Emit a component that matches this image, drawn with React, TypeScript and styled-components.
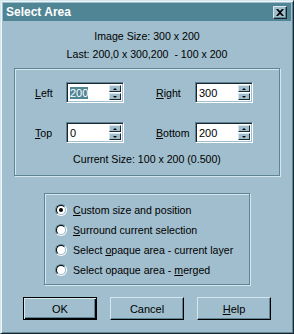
import React from 'react';
import styled, { createGlobalStyle } from 'styled-components';

const bg = '#a0becd';
const face = '#508595';
const shade = '#5e8595';
const light = '#d4e7ef';
const dark = '#1a262b';

const GlobalStyle = createGlobalStyle`
    body {
        margin: 0;
        background: ${bg};
        font-family: "Liberation Sans", Arial, sans-serif;
        font-size: 10.6px;
        color: #000;
    }
`;

const Window = styled.div`
    width: 294px;
    height: 334px;
    box-sizing: border-box;
    background: ${bg};
    border-top: 1px solid ${light};
    border-left: 1px solid ${light};
    border-right: 1px solid ${dark};
    border-bottom: 1px solid ${dark};
    box-shadow: inset 1px 1px 0 #eef6f9, inset -1px -1px 0 ${shade};
    padding: 2px;
    display: flex;
    flex-direction: column;
`;

const TitleBar = styled.div`
    height: 18px;
    flex-shrink: 0;
    display: flex;
    align-items: center;
    justify-content: space-between;
    padding: 0 4px 0 3px;
    background: ${face};
    color: #fff;
    font-weight: 700;
    font-size: 12px;
`;

const CloseButton = styled.div`
    width: 14px;
    height: 13px;
    box-sizing: border-box;
    background: ${bg};
    border-top: 1px solid ${light};
    border-left: 1px solid ${light};
    border-right: 1px solid ${dark};
    border-bottom: 1px solid ${dark};
    box-shadow: inset -1px -1px 0 ${shade};
    display: flex;
    align-items: center;
    justify-content: center;
`;

const Info = styled.div`
    margin-top: 6px;
    text-align: center;
    line-height: 18px;
`;

const Group = styled.div<{ $mx: number; $mt: number }>`
    margin: ${p => p.$mt}px ${p => p.$mx}px 0;
    border: 1px solid ${shade};
    box-shadow: inset 1px 1px 0 ${light}, 1px 1px 0 ${light};
`;

const FieldGroup = styled(Group)`
    padding: 13px 0 9px 20px;
`;

const FieldGrid = styled.div`
    display: grid;
    grid-template-columns: auto auto;
    justify-content: start;
    column-gap: 32px;
    row-gap: 19px;
`;

const FieldRow = styled.div`
    display: flex;
    align-items: center;
`;

const Label = styled.span<{ $w: number }>`
    width: ${p => p.$w}px;
`;

const SpinField = styled.div`
    width: 58px;
    height: 21px;
    box-sizing: border-box;
    background: #fff;
    border-top: 1px solid ${shade};
    border-left: 1px solid ${shade};
    border-right: 1px solid #fff;
    border-bottom: 1px solid #fff;
    box-shadow: inset 1px 1px 0 ${dark}, inset -1px -1px 0 ${bg};
    padding: 2px;
    display: flex;
    align-items: stretch;
`;

const Value = styled.div`
    flex: 1;
    display: flex;
    align-items: center;
    font-size: 11px;
    padding-left: 1px;
`;

const Selected = styled.span`
    background: ${face};
    color: #fff;
`;

const SpinColumn = styled.div`
    width: 12px;
    display: flex;
    flex-direction: column;
    gap: 1px;
`;

const SpinButton = styled.div<{ $down?: boolean }>`
    flex: 1;
    box-sizing: border-box;
    background: ${bg};
    border-top: 1px solid ${light};
    border-left: 1px solid ${light};
    border-right: 1px solid ${dark};
    border-bottom: 1px solid ${dark};
    display: flex;
    align-items: center;
    justify-content: center;
    &::after {
        content: '';
        border-left: 2px solid transparent;
        border-right: 2px solid transparent;
        ${p => (p.$down ? 'border-top: 2px solid #000;' : 'border-bottom: 2px solid #000;')}
    }
`;

const CurrentSize = styled.div`
    margin: 10px 0 0 -20px;
    text-align: center;
    line-height: 13px;
`;

const RadioGroup = styled(Group)`
    padding: 6px 0 4px 10px;
`;

const RadioRow = styled.div`
    height: 20px;
    display: flex;
    align-items: center;
    gap: 6px;
`;

const RadioOuter = styled.span`
    width: 12px;
    height: 12px;
    box-sizing: border-box;
    border-radius: 50%;
    border: 1px solid;
    border-color: ${shade} #fff #fff ${shade};
    display: flex;
`;

const RadioInner = styled.span<{ $checked?: boolean }>`
    flex: 1;
    border-radius: 50%;
    border: 1px solid;
    border-color: #000 ${bg} ${bg} #000;
    background: #fff;
    display: flex;
    align-items: center;
    justify-content: center;
    &::after {
        content: '';
        width: 4px;
        height: 4px;
        border-radius: 50%;
        background: ${p => (p.$checked ? '#000' : 'transparent')};
    }
`;

const ButtonRow = styled.div`
    margin-top: 12px;
    display: flex;
    justify-content: center;
    gap: 13px;
`;

const Button = styled.div<{ $default?: boolean }>`
    width: 74px;
    height: 23px;
    box-sizing: border-box;
    background: ${bg};
    display: flex;
    align-items: center;
    justify-content: center;
    font-size: 11px;
    border-top: 1px solid ${p => (p.$default ? '#000' : light)};
    border-left: 1px solid ${p => (p.$default ? '#000' : light)};
    border-right: 1px solid #000;
    border-bottom: 1px solid #000;
    box-shadow: ${p =>
        p.$default
            ? `inset 1px 1px 0 ${light}, inset -1px -1px 0 #000, inset -2px -2px 0 ${shade}`
            : `inset -1px -1px 0 ${shade}`};
`;

function Spin({ value, selected }: { value: string; selected?: boolean }) {
    return (
        <SpinField>
            <Value>{selected ? <Selected>{value}</Selected> : value}</Value>
            <SpinColumn>
                <SpinButton />
                <SpinButton $down />
            </SpinColumn>
        </SpinField>
    );
}

function Radio({ checked, children }: { checked?: boolean; children: React.ReactNode }) {
    return (
        <RadioRow>
            <RadioOuter>
                <RadioInner $checked={checked} />
            </RadioOuter>
            <span>{children}</span>
        </RadioRow>
    );
}

export default function App() {
    return (
        <>
            <GlobalStyle />
            <Window>
                <TitleBar>
                    <span>Select Area</span>
                    <CloseButton>
                        <svg width="8" height="7" viewBox="0 0 8 7">
                            <path d="M0 0h2l2 2 2-2h2L5 3.5 8 7H6L4 5 2 7H0l3-3.5z" fill="#000" />
                        </svg>
                    </CloseButton>
                </TitleBar>
                <Info>
                    <div>Image Size: 300 x 200</div>
                    <div>Last: 200,0 x 300,200 &nbsp;- 100 x 200</div>
                </Info>
                <FieldGroup $mx={11} $mt={5}>
                    <FieldGrid>
                        <FieldRow>
                            <Label $w={31}><u>L</u>eft</Label>
                            <Spin value="200" selected />
                        </FieldRow>
                        <FieldRow>
                            <Label $w={39}><u>R</u>ight</Label>
                            <Spin value="300" />
                        </FieldRow>
                        <FieldRow>
                            <Label $w={31}><u>T</u>op</Label>
                            <Spin value="0" />
                        </FieldRow>
                        <FieldRow>
                            <Label $w={39}><u>B</u>ottom</Label>
                            <Spin value="200" />
                        </FieldRow>
                    </FieldGrid>
                    <CurrentSize>Current Size: 100 x 200 (0.500)</CurrentSize>
                </FieldGroup>
                <RadioGroup $mx={41} $mt={17}>
                    <Radio checked><u>C</u>ustom size and position</Radio>
                    <Radio><u>S</u>urround current selection</Radio>
                    <Radio>Select <u>o</u>paque area - current layer</Radio>
                    <Radio>Select opaque area - <u>m</u>erged</Radio>
                </RadioGroup>
                <ButtonRow>
                    <Button $default>OK</Button>
                    <Button>Cancel</Button>
                    <Button><u>H</u>elp</Button>
                </ButtonRow>
            </Window>
        </>
    );
}
